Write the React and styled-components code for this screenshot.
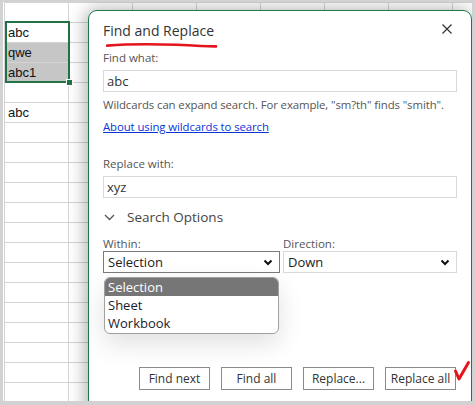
import React from "react";
import styled, { createGlobalStyle } from "styled-components";

const GlobalStyle = createGlobalStyle`
  html, body {
    margin: 0;
    padding: 0;
    background: #ffffff;
  }
`;

const uiFont = `"Open Sans", "Noto Sans", sans-serif`;
const cellFont = `"Liberation Sans", Arial, sans-serif`;

const sheetRows = [
  ["", false],
  ["abc", false],
  ["qwe", true],
  ["abc1", true],
  ["", false],
  ["abc", false],
];

const Sheet = () => {
  const rows = [...sheetRows];
  while (rows.length < 21) rows.push(["", false]);

  return (
    <Grid>
      {rows.map(([text, selected], r) =>
        Array.from({ length: 8 }).map((_, c) => (
          <Cell key={`${r}-${c}`} $selected={c === 0 && selected}>
            {c === 0 ? text : ""}
          </Cell>
        ))
      )}
    </Grid>
  );
};

const Chevron = ({ bold }) =>
  bold ? (
    <svg width="10" height="7" viewBox="0 0 10 7">
      <path d="M1.5 1.5 L5 5 L8.5 1.5" fill="none" stroke="#111" strokeWidth="2" />
    </svg>
  ) : (
    <svg width="11" height="7" viewBox="0 0 11 7">
      <path d="M1 1 L5.5 5.5 L10 1" fill="none" stroke="#555" strokeWidth="1.3" />
    </svg>
  );

const App = () => {
  return (
    <>
      <GlobalStyle />
      <Frame>
        <Sheet />
        <Selection>
          <FillHandle />
        </Selection>

        <Dialog>
          <Header>
            <Title>Find and Replace</Title>
            <CloseButton aria-label="Close">
              <svg width="10" height="10" viewBox="0 0 10 10">
                <path d="M0.5 0.5 L9.5 9.5 M9.5 0.5 L0.5 9.5" stroke="#333" strokeWidth="1.2" />
              </svg>
            </CloseButton>
          </Header>
          <Squiggle width="112" height="7" viewBox="0 0 112 7">
            <path
              d="M1 2.6 C 20 1.2, 45 1.0, 70 1.8 S 100 3.6, 110 3.4"
              fill="none"
              stroke="#e5151d"
              strokeWidth="2.6"
              strokeLinecap="round"
            />
          </Squiggle>

          <Label $top={0}>Find what:</Label>
          <TextBox $top={4}>abc</TextBox>
          <Help>Wildcards can expand search. For example, "sm?th" finds "smith".</Help>
          <HelpLink>About using wildcards to search</HelpLink>

          <Label $top={21}>Replace with:</Label>
          <TextBox $top={4}>xyz</TextBox>

          <OptionsToggle>
            <Chevron />
            <span>Search Options</span>
          </OptionsToggle>

          <SelectRow>
            <Field>
              <FieldLabel>Within:</FieldLabel>
              <Select $open>
                <span>Selection</span>
                <Chevron bold />
              </Select>
              <Menu>
                <MenuItem $active>Selection</MenuItem>
                <MenuItem>Sheet</MenuItem>
                <MenuItem>Workbook</MenuItem>
              </Menu>
            </Field>
            <Field>
              <FieldLabel>Direction:</FieldLabel>
              <Select>
                <span>Down</span>
                <Chevron bold />
              </Select>
            </Field>
          </SelectRow>

          <Buttons>
            <Button>Find next</Button>
            <Button>Find all</Button>
            <Button>Replace...</Button>
            <Button>Replace all</Button>
          </Buttons>
        </Dialog>

        <Check width="18" height="22" viewBox="0 0 18 22">
          <path
            d="M2.5 11 L6 19 L15.5 2.5"
            fill="none"
            stroke="#e5151d"
            strokeWidth="3"
            strokeLinecap="round"
            strokeLinejoin="round"
          />
        </Check>
      </Frame>
    </>
  );
};

export default App;

const Frame = styled.div`
  position: relative;
  width: 475px;
  height: 405px;
  box-sizing: border-box;
  border-style: solid;
  border-color: #d2d2d2;
  border-width: 2px 3px 4px 3px;
  overflow: hidden;
  background: #ffffff;
`;

const Grid = styled.div`
  display: grid;
  grid-template-columns: repeat(8, 64px);
  grid-auto-rows: 20px;
  margin-left: 1px;
  border-left: 1px solid #d4d4d4;
  border-top: 1px solid #d4d4d4;
`;

const Cell = styled.div`
  box-sizing: border-box;
  border-right: 1px solid #d4d4d4;
  border-bottom: 1px solid #d4d4d4;
  background: ${p => (p.$selected ? "#c6c6c6" : "#ffffff")};
  font-family: ${cellFont};
  font-size: 13px;
  line-height: 19px;
  padding-left: 3px;
  color: #111;
`;

const Selection = styled.div`
  position: absolute;
  left: 2px;
  top: 19px;
  width: 65px;
  height: 62px;
  box-sizing: border-box;
  border: 2px solid #217346;
`;

const FillHandle = styled.div`
  position: absolute;
  right: -5px;
  bottom: -5px;
  width: 5px;
  height: 5px;
  background: #217346;
  border: 1px solid #ffffff;
`;

const Dialog = styled.div`
  position: absolute;
  left: 85px;
  top: 8px;
  width: 384px;
  height: 410px;
  box-sizing: border-box;
  padding: 10px 14px 0 14px;
  background: #ffffff;
  border: 1px solid #1d7a47;
  border-radius: 9px 9px 0 0;
  box-shadow: -2px 0 18px rgba(0, 0, 0, 0.34);
  display: flex;
  flex-direction: column;
  font-family: ${uiFont};
`;

const Header = styled.div`
  display: flex;
  align-items: center;
  justify-content: space-between;
  height: 20px;
`;

const Title = styled.div`
  font-size: 14px;
  line-height: 20px;
  color: #333;
`;

const CloseButton = styled.div`
  display: flex;
  margin-right: 5px;
  margin-top: -4px;
`;

const Squiggle = styled.svg`
  display: block;
  margin-left: 3px;
  margin-top: 2px;
`;

const Label = styled.div`
  margin-top: ${p => p.$top}px;
  font-size: 11.5px;
  line-height: 16px;
  color: #555;
`;

const TextBox = styled.div`
  margin-top: ${p => p.$top}px;
  height: 22px;
  box-sizing: border-box;
  border: 1px solid #d8d8d8;
  padding-left: 3px;
  font-size: 13px;
  line-height: 20px;
  color: #333;
`;

const Help = styled.div`
  margin-top: 5px;
  font-size: 11.4px;
  letter-spacing: -0.1px;
  line-height: 16px;
  color: #555;
  white-space: nowrap;
`;

const HelpLink = styled.a`
  margin-top: 6px;
  font-size: 11.4px;
  letter-spacing: -0.1px;
  line-height: 16px;
  color: #0b34d6;
  text-decoration: underline;
  align-self: flex-start;
`;

const OptionsToggle = styled.div`
  margin-top: 9px;
  display: flex;
  align-items: center;
  gap: 12px;
  padding-left: 1px;
  height: 20px;
  font-size: 13.5px;
  color: #444;
`;

const SelectRow = styled.div`
  margin-top: 9px;
  display: grid;
  grid-template-columns: 177px 1fr;
  column-gap: 3px;
`;

const Field = styled.div`
  position: relative;
  display: flex;
  flex-direction: column;
`;

const FieldLabel = styled.div`
  font-size: 11.5px;
  line-height: 15px;
  color: #555;
`;

const Select = styled.div`
  height: 22px;
  box-sizing: border-box;
  border: 1px solid ${p => (p.$open ? "#7a7a7a" : "#d8d8d8")};
  display: flex;
  align-items: center;
  justify-content: space-between;
  padding: 0 6px 0 4px;
  font-size: 13px;
  color: #222;
`;

const Menu = styled.div`
  position: absolute;
  left: 1px;
  top: 41px;
  width: 175px;
  box-sizing: border-box;
  border: 1px solid #a0a0a0;
  border-radius: 6px;
  overflow: hidden;
  background: #ffffff;
  box-shadow: 0 10px 26px rgba(0, 0, 0, 0.12);
  padding-bottom: 1px;
`;

const MenuItem = styled.div`
  height: 18px;
  line-height: 18px;
  padding-left: 3px;
  font-size: 13px;
  background: ${p => (p.$active ? "#767676" : "transparent")};
  color: ${p => (p.$active ? "#ffffff" : "#1a1a2e")};
`;

const Buttons = styled.div`
  margin-top: 94px;
  display: flex;
  justify-content: flex-end;
  gap: 11px;
  margin-right: 1px;
`;

const Button = styled.div`
  width: 71px;
  height: 23px;
  box-sizing: border-box;
  border: 1px solid #8a8a8a;
  display: flex;
  align-items: center;
  justify-content: center;
  font-size: 12px;
  color: #333;
  background: #ffffff;
`;

const Check = styled.svg`
  position: absolute;
  left: 450px;
  top: 358px;
`;
